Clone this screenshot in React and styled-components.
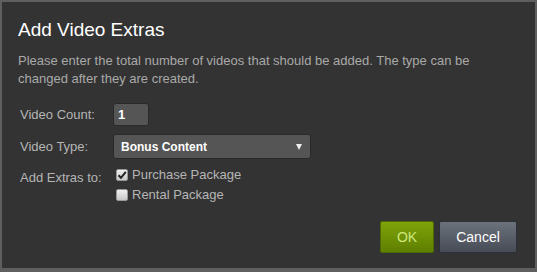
import React from 'react'
import styled, { createGlobalStyle } from 'styled-components'

const GlobalStyle = createGlobalStyle`
  html, body {
    margin: 0;
    padding: 0;
    background: #333333;
  }
  * { box-sizing: border-box; }
`

const Dialog = styled.div`
  width: 537px;
  height: 272px;
  background: #333333;
  border: 2px solid #5f5f5f;
  border-bottom-width: 4px;
  font-family: "Liberation Sans", Arial, sans-serif;
  padding: 15px 18px 0 16px;
  display: flex;
  flex-direction: column;
`

const Title = styled.h1`
  margin: 0;
  font-size: 19px;
  font-weight: normal;
  color: #ffffff;
  line-height: 26px;
`

const Description = styled.p`
  margin: 9px 0 0 0;
  font-size: 13px;
  line-height: 18px;
  color: #a9a9a9;
`

const Form = styled.div`
  display: grid;
  grid-template-columns: 93px 1fr;
  row-gap: 8px;
  margin-top: 15px;
  padding-left: 2px;
`

const Label = styled.div`
  font-size: 13px;
  color: #b5b5b5;
  line-height: 16px;
  align-self: ${p => (p.top ? 'start' : 'center')};
  padding-top: ${p => (p.top ? '3px' : '0')};
`

const CountInput = styled.div`
  width: 36px;
  height: 23px;
  background: #555555;
  border: 1px solid #2a2a2a;
  border-radius: 3px;
  color: #ffffff;
  font-weight: bold;
  font-size: 13px;
  line-height: 21px;
  padding-left: 4px;
`

const Select = styled.div`
  width: 198px;
  height: 25px;
  background: #555555;
  border: 1px solid #2a2a2a;
  border-radius: 3px;
  color: #ffffff;
  font-weight: bold;
  font-size: 12px;
  display: flex;
  align-items: center;
  justify-content: space-between;
  padding: 0 8px 0 7px;
`

const Arrow = styled.span`
  width: 0;
  height: 0;
  border-left: 3.5px solid transparent;
  border-right: 3.5px solid transparent;
  border-top: 6px solid #eeeeee;
`

const Checks = styled.div`
  display: flex;
  flex-direction: column;
  gap: 4px;
  padding-left: 3px;
`

const CheckRow = styled.label`
  display: flex;
  align-items: center;
  gap: 4px;
  font-size: 13px;
  color: #b5b5b5;
  line-height: 16px;
`

const Box = styled.span`
  width: 12px;
  height: 12px;
  background: linear-gradient(#f0f0f0, #c8c8c8);
  border: 1px solid #9a9a9a;
  border-radius: 2px;
  display: flex;
  align-items: center;
  justify-content: center;
`

const Footer = styled.div`
  margin-top: auto;
  margin-bottom: 15px;
  display: flex;
  justify-content: flex-end;
  gap: 5px;
`

const Button = styled.button`
  height: 32px;
  padding: 0 ${p => (p.primary ? '15px' : '16px')};
  min-width: ${p => (p.primary ? '54px' : '78px')};
  font-family: "Liberation Sans", Arial, sans-serif;
  font-size: 14px;
  border-radius: 2px;
  border: 1px solid ${p => (p.primary ? '#4c6a00' : '#2c3038')};
  color: ${p => (p.primary ? '#cde87c' : '#ffffff')};
  background: ${p =>
    p.primary
      ? 'linear-gradient(#7fa30a, #5e7f00)'
      : 'linear-gradient(#6c727c, #464b55)'};
`

function Check({ checked, children }) {
  return (
    <CheckRow>
      <Box>
        {checked && (
          <svg width="10" height="10" viewBox="0 0 10 10">
            <path d="M1.5 5.2 L4 7.8 L8.8 1.8" stroke="#222" strokeWidth="2" fill="none" />
          </svg>
        )}
      </Box>
      {children}
    </CheckRow>
  )
}

export default function App() {
  return (
    <>
      <GlobalStyle />
      <Dialog>
        <Title>Add Video Extras</Title>
        <Description>
          Please enter the total number of videos that should be added. The type can be changed after they are created.
        </Description>
        <Form>
          <Label>Video Count:</Label>
          <CountInput>1</CountInput>
          <Label>Video Type:</Label>
          <Select>
            Bonus Content
            <Arrow />
          </Select>
          <Label top>Add Extras to:</Label>
          <Checks>
            <Check checked>Purchase Package</Check>
            <Check>Rental Package</Check>
          </Checks>
        </Form>
        <Footer>
          <Button primary>OK</Button>
          <Button>Cancel</Button>
        </Footer>
      </Dialog>
    </>
  )
}
